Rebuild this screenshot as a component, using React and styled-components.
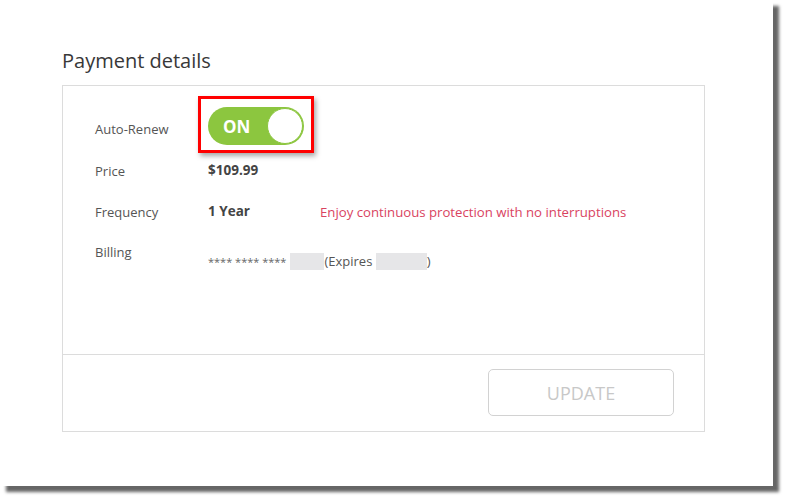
import React from 'react';
import styled, { createGlobalStyle } from 'styled-components';

const GlobalStyle = createGlobalStyle`
  html, body {
    margin: 0;
    padding: 0;
    background: #fff;
  }
  body {
    font-family: "Open Sans", "Noto Sans", sans-serif;
  }
`;

const Page = styled.div`
  height: 501px;
  overflow: hidden;
`;

const Frame = styled.div`
  width: 773px;
  height: 486px;
  box-sizing: border-box;
  background: #fff;
  box-shadow: 6px 6px 3px rgba(0, 0, 0, 0.6);
  padding: 47px 0 0 62px;
`;

const Title = styled.h2`
  margin: 0 0 10px;
  font-size: 20px;
  line-height: 28px;
  font-weight: 400;
  color: #383838;
`;

const Card = styled.div`
  width: 643px;
  height: 347px;
  box-sizing: border-box;
  border: 1px solid #dcdcdc;
  display: flex;
  flex-direction: column;
`;

const Body = styled.div`
  height: 269px;
  box-sizing: border-box;
  padding: 10px 0 0 32px;
  border-bottom: 1px solid #dcdcdc;
`;

const Row = styled.div`
  display: flex;
  align-items: ${p => (p.top ? 'flex-start' : 'center')};
  height: ${p => p.h || 41}px;
`;

const Label = styled.div`
  width: 113px;
  flex: none;
  font-size: 13px;
  line-height: ${p => p.lh || 20}px;
  margin-top: ${p => p.mt || 0}px;
  color: #555;
`;

const Value = styled.div`
  width: 112px;
  flex: none;
  font-size: 13.5px;
  line-height: 20px;
  margin-top: -2px;
  font-weight: 700;
  color: #444;
`;

const Note = styled.div`
  font-size: 13.2px;
  color: #d9435f;
`;

const Highlight = styled.div`
  margin-left: -10px;
  width: 116px;
  height: 57px;
  box-sizing: border-box;
  border: 3px solid #f00;
  box-shadow: 2px 3px 5px rgba(0, 0, 0, 0.35);
  padding: 8px 0 0 7px;
`;

const Track = styled.div`
  width: 96px;
  height: 38px;
  box-sizing: border-box;
  border-radius: 19px;
  background: #8cc63f;
  display: flex;
  align-items: center;
  justify-content: space-between;
  padding: 0 1px 0 15px;
`;

const TrackText = styled.span`
  font-size: 17px;
  font-weight: 700;
  color: #fff;
`;

const Knob = styled.span`
  width: 36px;
  height: 36px;
  box-sizing: border-box;
  border-radius: 50%;
  background: #fff;
  border: 1px solid #8cc63f;
`;

const Billing = styled.div`
  margin-top: 20px;
  display: flex;
  align-items: center;
  font-size: 13px;
  color: #555;
`;

const Stars = styled.span`
  font-size: 11px;
  color: #666;
  margin-right: 4px;
`;

const Masked = styled.span`
  display: inline-block;
  width: ${p => p.w}px;
  height: 17px;
  background: #e6e6e8;
`;

const Footer = styled.div`
  flex: 1;
  display: flex;
  justify-content: flex-end;
  align-items: flex-start;
  padding: 14px 30px 0 0;
`;

const UpdateButton = styled.button`
  width: 186px;
  height: 47px;
  background: #fff;
  border: 1px solid #d2d2d2;
  border-radius: 5px;
  font-family: inherit;
  font-size: 18px;
  color: #c8c8c8;
  cursor: default;
`;

export default function App() {
  return (
    <Page>
      <GlobalStyle />
      <Frame>
        <Title>Payment details</Title>
        <Card>
          <Body>
            <Row h={54} top>
              <Label mt={23}>Auto-Renew</Label>
              <Highlight>
                <Track>
                  <TrackText>ON</TrackText>
                  <Knob />
                </Track>
              </Highlight>
            </Row>
            <Row>
              <Label>Price</Label>
              <Value>$109.99</Value>
            </Row>
            <Row>
              <Label>Frequency</Label>
              <Value>1 Year</Value>
              <Note>Enjoy continuous protection with no interruptions</Note>
            </Row>
            <Row top>
              <Label lh={41}>Billing</Label>
              <Billing>
                <Stars>**** **** ****</Stars>
                <Masked w={34} />
                <span>(Expires&nbsp;</span>
                <Masked w={51} />
                <span>)</span>
              </Billing>
            </Row>
          </Body>
          <Footer>
            <UpdateButton>UPDATE</UpdateButton>
          </Footer>
        </Card>
      </Frame>
    </Page>
  );
}
